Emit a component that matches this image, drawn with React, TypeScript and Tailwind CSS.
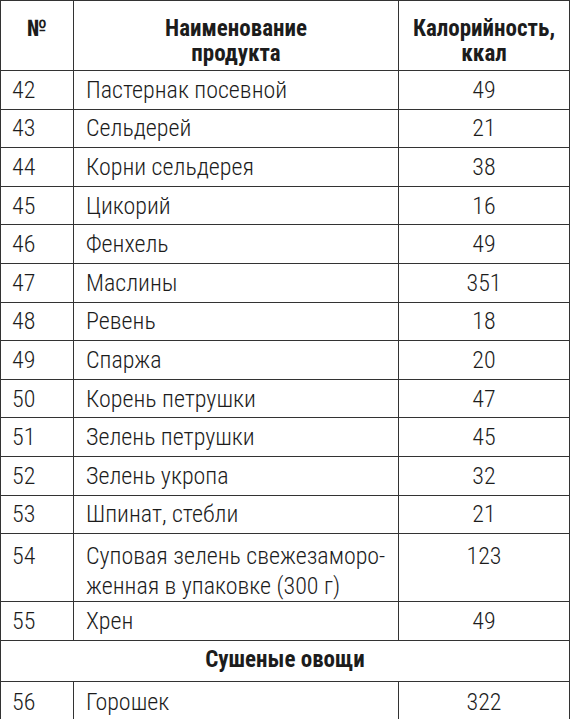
const rows: [string, string, string][] = [
  ['42', 'Пастернак посевной', '49'],
  ['43', 'Сельдерей', '21'],
  ['44', 'Корни сельдерея', '38'],
  ['45', 'Цикорий', '16'],
  ['46', 'Фенхель', '49'],
  ['47', 'Маслины', '351'],
  ['48', 'Ревень', '18'],
  ['49', 'Спаржа', '20'],
  ['50', 'Корень петрушки', '47'],
  ['51', 'Зелень петрушки', '45'],
  ['52', 'Зелень укропа', '32'],
  ['53', 'Шпинат, стебли', '21'],
];

const cell = 'border-[1.5px] border-[#333]';

export default function App() {
  return (
    <div
      className="w-[570px] bg-white text-[#1c1c1c]"
      style={{ fontFamily: '"Roboto Condensed", Roboto, sans-serif' }}
    >
      <table className="w-[570px] border-collapse table-fixed text-[24px] leading-[30px] font-light">
        <colgroup>
          <col className="w-[73px]" />
          <col className="w-[325px]" />
          <col />
        </colgroup>
        <thead>
          <tr className="h-[70px] text-[23px] leading-[25px]">
            <th className={`${cell} align-top pt-[15px] text-center font-bold`}>№</th>
            <th className={`${cell} align-top pt-[15px] text-center font-bold`}>
              Наименование
              <br />
              продукта
            </th>
            <th className={`${cell} align-top pt-[15px] text-center font-bold`}>
              Калорийность,
              <br />
              ккал
            </th>
          </tr>
        </thead>
        <tbody>
          {rows.map(([n, name, kcal]) => (
            <tr key={n} className="h-[38.6px]">
              <td className={`${cell} pl-[11px]`}>{n}</td>
              <td className={`${cell} pl-[12px]`}>{name}</td>
              <td className={`${cell} text-center`}>{kcal}</td>
            </tr>
          ))}
          <tr className="h-[66px]">
            <td className={`${cell} pl-[11px] align-top pt-[7px]`}>54</td>
            <td className={`${cell} pl-[12px] align-top pt-[7px]`}>
              Суповая зелень свежезаморо-
              <br />
              женная в упаковке (300 г)
            </td>
            <td className={`${cell} text-center align-top pt-[7px]`}>123</td>
          </tr>
          <tr className="h-[39px]">
            <td className={`${cell} pl-[11px]`}>55</td>
            <td className={`${cell} pl-[12px]`}>Хрен</td>
            <td className={`${cell} text-center`}>49</td>
          </tr>
          <tr className="h-[41px]">
            <td colSpan={3} className={`${cell} text-center font-bold text-[23px] pb-[3px]`}>
              Сушеные овощи
            </td>
          </tr>
          <tr className="h-[40px]">
            <td className={`${cell} pl-[11px]`}>56</td>
            <td className={`${cell} pl-[12px]`}>Горошек</td>
            <td className={`${cell} text-center`}>322</td>
          </tr>
        </tbody>
      </table>
    </div>
  );
}
